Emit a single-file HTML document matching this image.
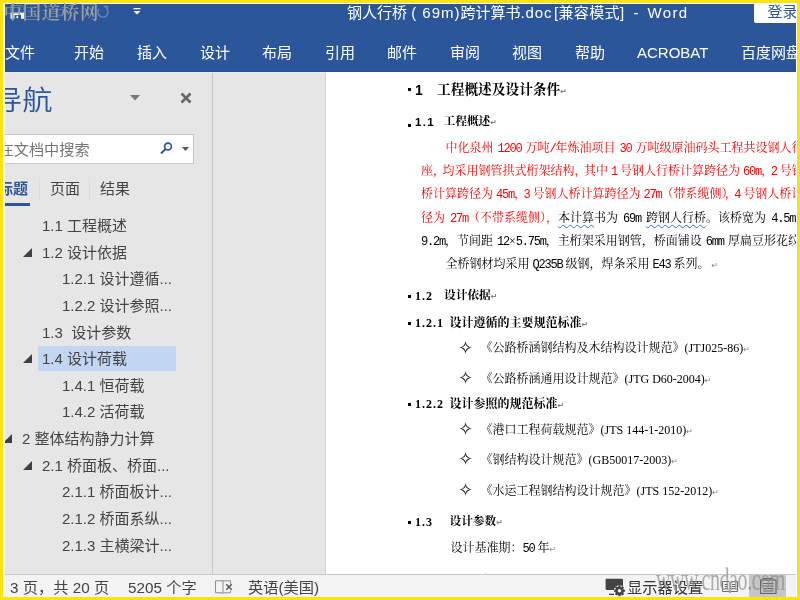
<!DOCTYPE html>
<html lang="zh-CN">
<head>
<meta charset="utf-8">
<title>钢人行桥 ( 69m)跨计算书.doc [兼容模式] - Word</title>
<style>
*{margin:0;padding:0;box-sizing:border-box}
html,body{width:800px;height:600px;overflow:hidden;background:#f7e30e}
body{position:relative;font-family:"Liberation Sans","Noto Sans CJK SC",sans-serif;color:#444}
#white{position:absolute;left:3px;top:3px;width:794px;height:594px;background:#fff}
#clip{position:absolute;left:5px;top:4px;width:791px;height:593px;overflow:hidden;background:#fff}
#pg{position:absolute;left:-5px;top:-4px;width:800px;height:600px;will-change:transform}
.a{position:absolute;white-space:nowrap}
/* header */
#hdr{left:0;top:0;width:800px;height:72px;background:#2b579a}
.ui{font-size:15px;line-height:20px}
.w{color:#fff}
#title{left:347px;top:3px;font-size:15px;line-height:20px;color:#fff}
#login{left:754px;top:3px;width:46px;height:20px;background:#fff;color:#2b579a;font-size:15px;line-height:18px;padding-left:13.500px;border-bottom-left-radius:2px}
.tab{top:43px;font-size:15px;line-height:20px;color:#fff}
#wm1{left:3.500px;top:0px;font-family:"Liberation Serif","Noto Serif CJK SC",serif;font-size:18.500px;font-weight:600;line-height:26px;color:#a0a0a0;letter-spacing:0.600px}
/* nav */
#navbg{left:0;top:72px;width:326px;height:502px;background:#e6e6e6}
#vline{left:212px;top:73px;width:1px;height:501px;background:#c8c8c8}
#navh{left:-8px;top:84.500px;transform-origin:0 0;transform:scaleX(1.1);font-size:27.500px;line-height:32px;color:#2b579a;font-weight:350}
#search{left:0;top:133.500px;width:194px;height:30px;background:#fff;border:1px solid #c6c6c6}
#stext{left:-1.500px;top:139.500px;font-size:15.200px;line-height:20px;color:#767676}
.ntab{top:179px;font-size:15px;line-height:20px;color:#444}
.t{font-size:15px;line-height:20px;color:#444}
.tri{width:0;height:0;border-left:9px solid transparent;border-bottom:9px solid #404040}
#sel{left:38px;top:346px;width:138px;height:25px;background:#c2d5f2}
/* doc */
#doc{left:326px;top:72px;width:474px;height:502px;background:#fff}
.d{font-family:"Liberation Serif","Noto Serif CJK SC",serif;font-size:12px;line-height:16px;color:#000}
.b{font-weight:700}
.r{color:#ff0000}
.m{font-family:"Liberation Mono",monospace;font-size:12px;letter-spacing:-1.2px}
.pm{color:#7f7f7f;font-size:8px;font-family:"DejaVu Sans",sans-serif}
.sb{font-family:"Liberation Sans",sans-serif;font-weight:700}
.mb{font-family:"Liberation Serif",serif;font-weight:700;font-size:12px;letter-spacing:1px}
.tn{font-family:"Liberation Serif",serif;font-size:12px}
.st{font-family:"DejaVu Sans",sans-serif;font-size:18px;line-height:16px;color:#000}
.wv{text-decoration:underline wavy #2f6fe0 1px;text-underline-offset:2px}
.m{word-spacing:-3px}
.l1 .m{word-spacing:-2px}
.l4 .m{word-spacing:-1px}
.c{margin-right:-2.500px}
.c3{margin-right:-3px}
/* status */
#status{left:0;top:574px;width:800px;height:23px;background:#f3f3f3;border-top:1px solid #c8c8c8}
.s{top:578px;font-size:15.250px;line-height:20px;color:#444}
#wm2{left:656px;top:559.500px;font-family:"Liberation Serif",serif;font-size:20px;line-height:24px;color:#8e8e8e;opacity:.72;transform-origin:0 0;transform:scale(1,1.56);letter-spacing:-0.4px}
</style>
</head>
<body>
<div id="white"></div>
<div id="clip"><div id="pg">

<div id="hdr" class="a"></div>
<!-- quick access icons -->
<svg class="a" style="left:10px;top:5px" width="15" height="15" viewBox="0 0 15 15"><path d="M1 0.500h11l2 2v5.500h-13z" fill="none" stroke="#fff" stroke-opacity=".3" stroke-width="1"/><rect x="0.500" y="7.750" width="13.500" height="6" fill="#fff"/><rect x="4.500" y="10" width="6.500" height="4" fill="#2b579a"/><rect x="6.500" y="10.700" width="1.600" height="2.600" fill="#fff"/></svg>
<svg class="a" style="left:54px;top:6px" width="12" height="11" viewBox="0 0 12 11"><path d="M2.500 3.500h4a3 3 0 0 1 0 6h-3" fill="none" stroke="#4d74b3" stroke-width="1.500"/><path d="M4 0.500l-3.500 3l3.500 3z" fill="#4d74b3"/></svg>
<svg class="a" style="left:96px;top:4px" width="14" height="16" viewBox="0 0 14 16"><path d="M3 5a5 5 0 1 0 7.500 -0.500" fill="none" stroke="#5f86c2" stroke-width="1.600"/><path d="M7 1.500h5v5z" fill="#5f86c2"/></svg>
<svg class="a" style="left:133px;top:8px" width="8" height="7" viewBox="0 0 8 7"><rect x="0.5" y="0" width="7" height="1.3" fill="#fff"/><path d="M0.5 3h7L4 6.5z" fill="#fff"/></svg>
<div id="title" class="a">钢人行桥 <span style="letter-spacing:1px">( 69m)</span>跨计算书<span style="letter-spacing:0.9px">.doc</span><span style="margin-left:1.500px;letter-spacing:0.350px">[兼容模式]</span><span style="margin-left:9px">-</span><span style="margin-left:9px;letter-spacing:1.400px">Word</span></div>
<div id="login" class="a">登录</div>

<div class="a tab" style="left:5px">文件</div>
<div class="a tab" style="left:74px">开始</div>
<div class="a tab" style="left:137px">插入</div>
<div class="a tab" style="left:200px">设计</div>
<div class="a tab" style="left:262px">布局</div>
<div class="a tab" style="left:325px">引用</div>
<div class="a tab" style="left:387px">邮件</div>
<div class="a tab" style="left:450px">审阅</div>
<div class="a tab" style="left:512px">视图</div>
<div class="a tab" style="left:575px">帮助</div>
<div class="a tab" style="left:637px">ACROBAT</div>
<div class="a tab" style="left:741px">百度网盘</div>

<!-- navigation pane -->
<div id="navbg" class="a"></div>
<div id="vline" class="a"></div>
<div class="a" style="left:0;top:71px;width:800px;height:1px;background:#24509a"></div>
<div class="a" style="left:0;top:72px;width:326px;height:1px;background:#f0eeec"></div>
<div class="a" style="left:325px;top:73px;width:1px;height:501px;background:#cfcfcf"></div>
<div id="navh" class="a">导航</div>
<svg class="a" style="left:130px;top:95px" width="10" height="6" viewBox="0 0 10 6"><path d="M0 0h10L5 5.5z" fill="#777"/></svg>
<svg class="a" style="left:180px;top:92px" width="12" height="12" viewBox="0 0 12 12"><path d="M1.5 1.5l9 9M10.500 1.5l-9 9" stroke="#666" stroke-width="2.6" fill="none"/></svg>
<div id="search" class="a"></div>
<div id="stext" class="a">在文档中搜索</div>
<svg class="a" style="left:160px;top:142px" width="13" height="12" viewBox="0 0 13 12"><circle cx="8" cy="4.5" r="3.4" fill="none" stroke="#2b579a" stroke-width="1.7"/><path d="M5.500 7L1 11.500" stroke="#2b579a" stroke-width="2"/></svg>
<svg class="a" style="left:182px;top:147px" width="7" height="4" viewBox="0 0 7 4"><path d="M0 0h7L3.500 4z" fill="#555"/></svg>

<div class="a ntab" style="left:-2px;color:#2b579a;font-weight:700">标题</div>
<div class="a" style="left:5px;top:203px;width:25px;height:3px;background:#2b579a"></div>
<div class="a" style="left:39px;top:178px;width:1px;height:22px;background:#dcdcdc"></div>
<div class="a" style="left:89px;top:178px;width:1px;height:22px;background:#dcdcdc"></div>
<div class="a ntab" style="left:50px">页面</div>
<div class="a ntab" style="left:100px">结果</div>

<div id="sel" class="a"></div>
<div class="a t" style="left:42px;top:216px">1.1 工程概述</div>
<div class="a tri" style="left:23px;top:248px"></div>
<div class="a t" style="left:42px;top:243px">1.2 设计依据</div>
<div class="a t" style="left:62px;top:269px">1.2.1 设计遵循...</div>
<div class="a t" style="left:62px;top:296px">1.2.2 设计参照...</div>
<div class="a t" style="left:42px;top:323px">1.3&nbsp; 设计参数</div>
<div class="a tri" style="left:23px;top:354px"></div>
<div class="a t" style="left:42px;top:349px">1.4 设计荷载</div>
<div class="a t" style="left:62px;top:376px">1.4.1 恒荷载</div>
<div class="a t" style="left:62px;top:402px">1.4.2 活荷载</div>
<div class="a tri" style="left:3px;top:434px"></div>
<div class="a t" style="left:22px;top:429px">2 整体结构静力计算</div>
<div class="a tri" style="left:23px;top:461px"></div>
<div class="a t" style="left:42px;top:456px">2.1 桥面板、桥面...</div>
<div class="a t" style="left:62px;top:482px">2.1.1 桥面板计...</div>
<div class="a t" style="left:62px;top:509px">2.1.2 桥面系纵...</div>
<div class="a t" style="left:62px;top:536px">2.1.3 主横梁计...</div>

<!-- document -->
<div id="doc" class="a"></div>

<div class="a" style="left:408px;top:88px;width:3px;height:3px;background:#000"></div>
<div class="a d b" style="left:415px;top:80px;font-size:13.7px;line-height:20px"><span class="sb" style="font-size:14px">1</span></div>
<div class="a d b" style="left:437px;top:80px;font-size:13.7px;line-height:20px">工程概述及设计条件<span class="pm">↵</span></div>

<div class="a" style="left:408px;top:124px;width:3px;height:3px;background:#000"></div>
<div class="a d b" style="left:415px;top:112px;font-size:11.7px;line-height:20px"><span class="sb" style="font-size:11.500px;letter-spacing:1.3px">1.1</span></div>
<div class="a d b" style="left:443.500px;top:112px;font-size:11.7px;line-height:20px">工程概述<span class="pm">↵</span></div>

<div class="a d r l1" style="left:445.500px;top:139.5px">中化泉州<span class="m"> 1200 </span>万吨<span class="m">/</span>年炼油项目<span class="m"> 30 </span>万吨级原油码头工程共设钢人行桥<span class="m"> 4</span></div>
<div class="a d r" style="left:421px;top:162.75px">座<span class="c">，</span>均采用钢管拱式桁架结构<span class="c">，</span>其中<span class="m"> 1 </span>号钢人行桥计算跨径为<span class="m"> 60m</span><span class="c">，</span><span class="m">2 </span>号钢人行</div>
<div class="a d r" style="left:421px;top:186px">桥计算跨径为<span class="m"> 45m</span><span class="c">，</span><span class="m">3 </span>号钢人桥计算跨径为<span class="m"> 27m</span>（带系缆侧<span class="c3">）</span><span class="c">，</span><span class="m">4 </span>号钢人桥计算跨</div>
<div class="a d l4" style="left:421px;top:209.75px"><span class="r">径为<span class="m"> 27m</span>（不带系缆侧），</span><span class="wv">本计算</span>书为<span class="m"> 69m </span><span class="wv">跨钢人行桥</span>。该桥宽为<span class="m"> 4.5m</span>，</div>
<div class="a d l1" style="left:421px;top:232.5px"><span class="m">9.2m</span>，节间距<span class="m"> 12</span>×<span class="m">5.75m</span>，主桁架采用钢管，桥面铺设<span class="m"> 6mm </span>厚扁豆形花纹</div>
<div class="a d" style="left:445.500px;top:255.75px">全桥钢材均采用<span class="m"> Q235B </span>级钢，焊条采用<span class="m"> E43 </span>系列。<span class="pm" style="margin-left:2px">↵</span></div>

<div class="a" style="left:408px;top:294.75px;width:3px;height:3px;background:#000"></div>
<div class="a d b" style="left:415px;top:287.75px"><span class="mb">1.2</span></div>
<div class="a d b" style="left:444px;top:287.75px;font-size:11.7px">设计依据<span class="pm">↵</span></div>

<div class="a" style="left:408px;top:321.75px;width:3px;height:3px;background:#000"></div>
<div class="a d b" style="left:415px;top:314.75px"><span class="mb">1.2.1</span></div>
<div class="a d b" style="left:449.500px;top:314.75px">设计遵循的主要规范标准<span class="pm">↵</span></div>

<div class="a st" style="left:458px;top:339.75px">✧</div>
<div class="a d" style="left:480.500px;top:340.25px">《公路桥涵钢结构及木结构设计规范》<span class="tn">(JTJ025-86)</span><span class="pm">↵</span></div>
<div class="a st" style="left:458px;top:370.25px">✧</div>
<div class="a d" style="left:480.500px;top:370.75px">《公路桥涵通用设计规范》<span class="tn">(JTG D60-2004)</span><span class="pm">↵</span></div>

<div class="a" style="left:408px;top:402.75px;width:3px;height:3px;background:#000"></div>
<div class="a d b" style="left:415px;top:395.75px"><span class="mb">1.2.2</span></div>
<div class="a d b" style="left:449.500px;top:395.75px">设计参照的规范标准<span class="pm">↵</span></div>

<div class="a st" style="left:458px;top:421.25px">✧</div>
<div class="a d" style="left:480.500px;top:421.75px">《港口工程荷载规范》<span class="tn">(JTS 144-1-2010)</span><span class="pm">↵</span></div>
<div class="a st" style="left:458px;top:451.25px">✧</div>
<div class="a d" style="left:480.500px;top:451.75px">《钢结构设计规范》<span class="tn">(GB50017-2003)</span><span class="pm">↵</span></div>
<div class="a st" style="left:458px;top:482.25px">✧</div>
<div class="a d" style="left:480.500px;top:482.75px">《水运工程钢结构设计规范》<span class="tn">(JTS 152-2012)</span><span class="pm">↵</span></div>

<div class="a" style="left:408px;top:520.75px;width:3px;height:3px;background:#000"></div>
<div class="a d b" style="left:415px;top:513.75px"><span class="mb">1.3</span></div>
<div class="a d b" style="left:449.500px;top:513.75px;font-size:11.7px">设计参数<span class="pm">↵</span></div>

<div class="a d" style="left:450.500px;top:539.75px">设计基准期：<span class="m">50 </span>年<span class="pm">↵</span></div>

<div class="a" style="left:408px;top:579.75px;width:3px;height:3px;background:#000"></div>
<div class="a d b" style="left:415px;top:572.75px"><span class="mb">1.4</span></div>
<div class="a d b" style="left:443.500px;top:572.75px;font-size:11.7px">设计荷载<span class="pm">↵</span></div>

<!-- status bar -->
<div id="status" class="a"></div>
<div class="a s" style="left:10px">3 页，共 20 页</div>
<div class="a s" style="left:128px">5205 个字</div>
<svg class="a" style="left:215px;top:579.500px" width="19" height="15" viewBox="0 0 19 15"><path d="M0.500 0.800h7.500v12l-0.500 1l-0.500 -1h-6.500zM8 0.800h7.500v3.500M15.500 10.500v2.300h-7" fill="none" stroke="#8c8c8c" stroke-width="1"/><path d="M11.300 4.300l5.400 5.400M16.700 4.300l-5.400 5.400" stroke="#555" stroke-width="1.5" fill="none"/></svg>
<div class="a s" style="left:248px">英语(美国)</div>
<div class="a s" style="left:627px;color:#333">显示器设置</div>
<svg class="a" style="left:605px;top:578px" width="21" height="19" viewBox="0 0 21 19"><rect x="0.600" y="0.700" width="17.400" height="11.300" rx="1" fill="#444"/><rect x="4" y="15.700" width="5" height="1.300" fill="#444"/><circle cx="14.500" cy="12.800" r="5.600" fill="#f3f3f3"/><circle cx="14.500" cy="12.800" r="3.300" fill="none" stroke="#444" stroke-width="2.200"/><g stroke="#444" stroke-width="2"><path d="M14.500 7.300v11M9 12.800h11M10.600 8.900l7.800 7.800M18.400 8.900l-7.800 7.800"/></g><circle cx="14.500" cy="12.800" r="1.700" fill="#f3f3f3"/></svg>
<div class="a" style="left:749px;top:575px;width:37px;height:22px;background:#c6c6c6"></div>
<svg class="a" style="left:722px;top:580px" width="16" height="13" viewBox="0 0 16 13"><path d="M0.500 1.500h6.500l1 1l1 -1h6.500v10h-6.500l-1 1l-1 -1h-6.500z" fill="none" stroke="#6a6a6a" stroke-width="1"/><path d="M8 2.500v10M2.500 4.500h3.500M2.500 6.500h3.500M2.500 8.500h3.500M10 4.500h3.500M10 6.500h3.500M10 8.500h3.500" stroke="#6a6a6a" stroke-width="1" fill="none"/></svg>
<svg class="a" style="left:760px;top:578px" width="17" height="16" viewBox="0 0 17 16"><rect x="0.500" y="2" width="15.500" height="13.500" fill="none" stroke="#666" stroke-width="1.200"/><path d="M3 0.500h10.500" stroke="#666" stroke-width="1"/><path d="M3 5.500h10.500M3 8h10.500M3 10.500h10.500M3 13h10.500" stroke="#666" stroke-width="1.200"/></svg>
<div id="wm2" class="a">www.cndao.com</div>

</div></div>
<div id="wm1" class="a">中国道桥网</div>
</body>
</html>
